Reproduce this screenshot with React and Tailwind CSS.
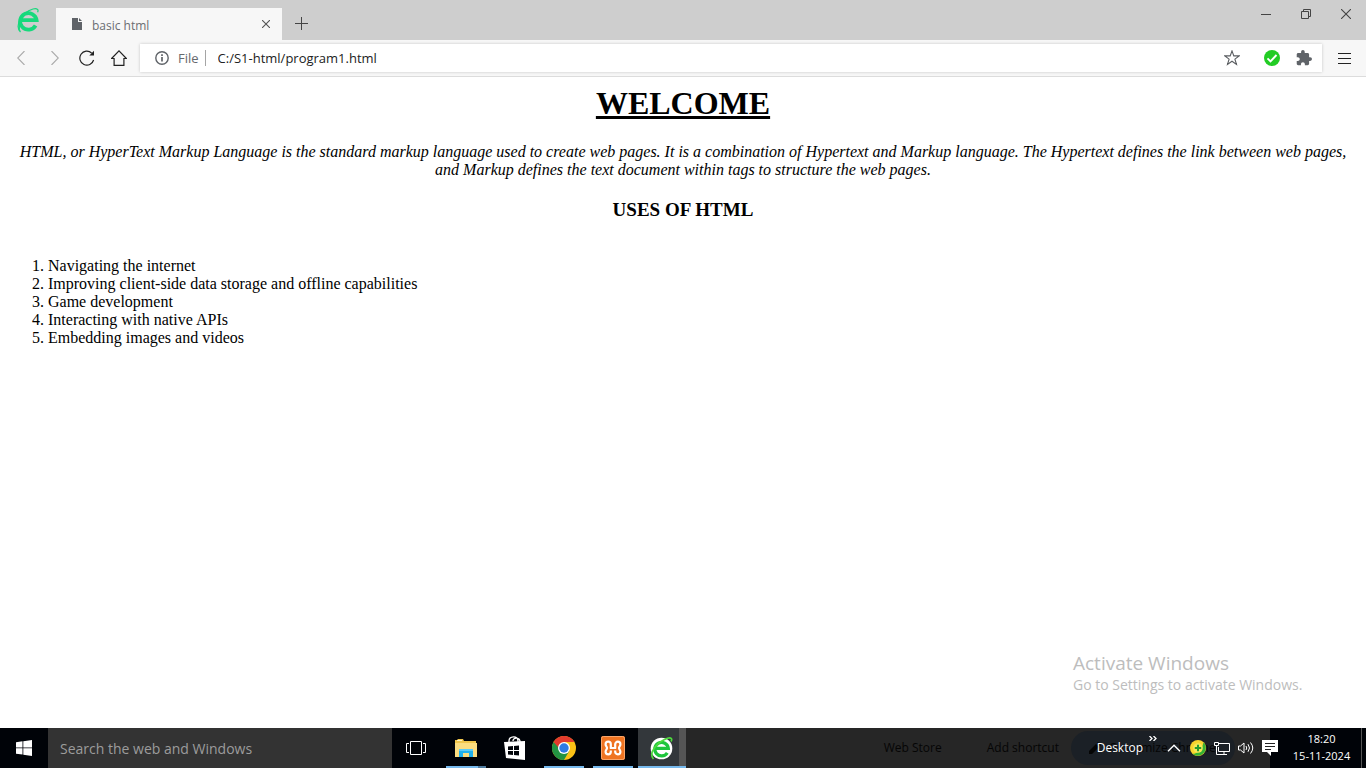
import React from "react";

const USES = [
  "Navigating the internet",
  "Improving client-side data storage and offline capabilities",
  "Game development",
  "Interacting with native APIs",
  "Embedding images and videos",
];

function BrowserLogo({ className }) {
  return (
    <svg viewBox="0 0 24 26" className={className} fill="none" aria-hidden="true">
      <path d="M6 13.200h14.600A8.300 8.300 0 1 0 19.600 18.500" stroke="currentColor" strokeWidth="3.800" />
      <path d="M4.500 25C-1 20 4 6 17 2c4-1 6 .4 4.600 3.200" stroke="currentColor" strokeWidth="1.200" />
      <path d="M4.500 25C0 19 3 8 14 3 6 10 2.500 18 4.500 25z" fill="currentColor" />
    </svg>
  );
}

function TitleBar() {
  return (
    <header className="flex h-10 items-stretch bg-[#cecece]">
      <div className="flex w-14 items-center justify-center">
        <BrowserLogo className="h-[26px] w-6 text-[#17d97c]" />
      </div>
      <div className="mt-2 flex w-[226px] items-center bg-[#f7f7f7] pl-4 pr-2.5">
        <svg viewBox="0 0 10 12" className="h-3 w-2.5" aria-hidden="true">
          <path d="M0 0h6v4h4v8H0z" fill="#5f6368" />
          <path d="M7 0l3 3H7z" fill="#5f6368" />
        </svg>
        <span className="ml-2.5 flex-1 pt-1 text-[12px] leading-4 text-[#6b6e72]">basic html</span>
        <button aria-label="Close tab" className="flex size-3 items-center justify-center">
          <svg viewBox="0 0 8 8" className="size-2" stroke="#555" strokeWidth="1.1"><path d="M0 0l8 8M8 0L0 8" /></svg>
        </button>
      </div>
      <button aria-label="New tab" className="flex w-[39px] items-center justify-center pt-[7px]">
        <svg viewBox="0 0 13 13" className="size-[13px]" stroke="#444"><path d="M0 6.500h13M6.500 0v13" /></svg>
      </button>
      <div className="ml-auto flex h-7 items-center">
        <button aria-label="Minimize" className="flex h-7 w-10 items-center justify-center">
          <svg viewBox="0 0 10 10" className="size-2.5" stroke="#444"><path d="M0 5.500h10" /></svg>
        </button>
        <button aria-label="Restore" className="flex h-7 w-10 items-center justify-center">
          <svg viewBox="0 0 10 10" className="size-2.5" fill="none" stroke="#444"><path d="M.5 2.500h7v7h-7zM2.500 2V.5h7v7H8" /></svg>
        </button>
        <button aria-label="Close" className="flex h-7 w-10 items-center justify-center">
          <svg viewBox="0 0 10 10" className="size-2.5" stroke="#444" strokeWidth="1.1"><path d="M0 0l10 10M10 0L0 10" /></svg>
        </button>
      </div>
    </header>
  );
}

function Toolbar() {
  return (
    <nav className="flex h-[37px] items-center border-b border-[#dcdcdc] bg-[#f7f7f7]">
      <div className="flex w-[140px] items-center gap-4 pl-[13px]">
        <button aria-label="Back" className="flex size-4 items-center justify-center">
          <svg viewBox="0 0 8 14" className="h-3.5 w-2" fill="none" stroke="#aaa" strokeWidth="1.1"><path d="M7.500 0L.7 7l6.800 7" /></svg>
        </button>
        <button aria-label="Forward" className="ml-0.5 flex size-4 items-center justify-center">
          <svg viewBox="0 0 8 14" className="h-3.5 w-2" fill="none" stroke="#aaa" strokeWidth="1.100"><path d="M.5 0l6.800 7L.5 14" /></svg>
        </button>
        <button aria-label="Reload" className="flex size-4 items-center justify-center">
          <svg viewBox="0 0 16 16" className="size-4" fill="none" stroke="#222" strokeWidth="1.200"><path d="M14.600 10A7 7 0 1 1 12.600 3" /><path d="M15 .8v4.700h-4.700z" fill="#222" stroke="none" /></svg>
        </button>
        <button aria-label="Home" className="flex size-4 items-center justify-center">
          <svg viewBox="0 0 16 16" className="size-4" fill="none" stroke="#222" strokeWidth="1.200"><path d="M.6 8.500L8 .9l7.400 7.600h-2.500v6.900H3.100V8.500z" /></svg>
        </button>
      </div>
      <div className="flex h-7 min-w-0 flex-1 items-center bg-white pl-[15px] pr-2.5 shadow-[0_0_3px_rgba(0,0,0,0.2)]">
        <svg viewBox="0 0 14 14" className="size-3.5 shrink-0" fill="none" stroke="#5f6368" strokeWidth="1.400" aria-hidden="true">
          <circle cx="7" cy="7" r="6.200" /><path d="M7 6v4.500M7 3.300v1.600" strokeWidth="1.700" />
        </svg>
        <label htmlFor="address" className="ml-[9px] mr-1.5 text-[13px] leading-4 text-[#66696d]">File</label>
        <span className="h-4 w-px bg-[#a5a5a5]" />
        <input id="address" defaultValue="C:/S1-html/program1.html" className="ml-3 min-w-0 flex-1 bg-transparent text-[13px] leading-5 text-[#222] outline-none" />
        <button aria-label="Bookmark" className="mr-6">
          <svg viewBox="0 0 16 16" className="block size-4" fill="none" stroke="#5a5d61" strokeWidth="1.100"><path d="M8 .9l1.800 5h5.400l-4.300 3.200 1.600 5.300L8 11.200l-4.500 3.200 1.600-5.300L.8 5.900h5.400z" /></svg>
        </button>
        <button aria-label="Site is safe" className="mr-4">
          <svg viewBox="0 0 16 16" className="block size-4"><circle cx="8" cy="8" r="8" fill="#22cc24" /><path d="M3.500 8.300l3 3 6-6.300" fill="none" stroke="#fff" strokeWidth="1.900" /></svg>
        </button>
        <button aria-label="Extensions">
          <svg viewBox="1 1 22 22" className="block size-4" fill="#5f6368"><path d="M20.500 11H19V7c0-1.100-.9-2-2-2h-4V3.500a2.500 2.500 0 0 0-5 0V5H4c-1.100 0-2 .9-2 2v3.800h1.500c1.500 0 2.700 1.200 2.700 2.700S5 16.200 3.500 16.200H2V20c0 1.100.9 2 2 2h3.800v-1.500c0-1.500 1.200-2.700 2.700-2.700s2.700 1.200 2.700 2.700V22H17c1.100 0 2-.9 2-2v-4h1.500a2.500 2.500 0 0 0 0-5z" /></svg>
        </button>
      </div>
      <button aria-label="Menu" className="flex w-11 items-center justify-center">
        <svg viewBox="0 0 13 12" className="mt-0.5 h-3 w-[13px]" stroke="#222"><path d="M0 .5h13M0 5.500h13M0 10.500h13" /></svg>
      </button>
    </nav>
  );
}

function Document() {
  return (
    <main className="flex-1 bg-white px-2 pt-2 font-['Liberation_Serif',serif] text-base leading-[18px] text-black">
      <h1 className="mb-[21px] text-center text-[32px] font-bold leading-[37px] underline">WELCOME</h1>
      <p className="mb-5 text-center italic">
        HTML, or HyperText Markup Language is the standard markup language used to create web pages. It is a combination
        of Hypertext and Markup language. The Hypertext defines the link between web pages, and Markup defines the text
        document within tags to structure the web pages.
      </p>
      <h3 className="mb-[37px] text-center text-[19px] font-bold leading-[21px]">USES OF HTML</h3>
      <ol className="list-decimal pl-10">
        {USES.map((use) => (
          <li key={use}>{use}</li>
        ))}
      </ol>
    </main>
  );
}

function TaskbarApps() {
  return (
    <div className="flex gap-px">
      <button aria-label="Task view" className="mr-px flex w-12 items-center justify-center">
        <svg viewBox="0 0 20 14" className="h-3.5 w-5" fill="none" stroke="#fff"><path d="M4.500.5h11v13h-11zM3 2.500H.5v9H3M17 2.500h2.500v9H17" /></svg>
      </button>
      <button aria-label="File Explorer" className="flex w-12 flex-col items-center">
        <span className="flex flex-1 items-center pt-0.5">
          <svg viewBox="0 0 22 18" className="h-[18px] w-[22px]">
            <path d="M0 1h2l1-1h5l1 2h12v16H0z" fill="#f0c64c" />
            <path d="M0 4h22v14H0z" fill="#fbdd80" />
            <path d="M2 1.500h5" stroke="#fff3c0" />
            <path d="M4 18v-8h14v8h-4v-4H8v4z" fill="#1fb0ec" />
            <path d="M4 10h14v2H4z" fill="#5ccbf5" />
          </svg>
        </span>
        <span className="flex h-0.5 w-10"><span className="flex-1 bg-[#76b9ed]" /><span className="w-2 bg-[#4f7ca0]" /></span>
      </button>
      <button aria-label="Store" className="flex w-12 items-center justify-center">
        <svg viewBox="0 0 22 24" className="h-6 w-[22px]">
          <path d="M5 7V5c0-5 9-6 9 0v2M9 5c0-4 7-4 7 1" fill="none" stroke="#fff" strokeWidth="1.400" />
          <path d="M0 6l21-1v19L2 22z" fill="#fff" />
          <path d="M4 10.500l5-.5v4H4zM10 10l5-.5V14h-5zM4 15h5v4l-5-.5zM10 15h5v4.500l-5-.5z" fill="#000308" />
        </svg>
      </button>
      <button aria-label="Chrome" className="flex w-12 flex-col items-center">
        <span className="flex flex-1 items-center pt-0.5">
          <svg viewBox="0 0 24 24" className="size-6">
            <circle cx="12" cy="12" r="12" fill="#fbc116" />
            <path d="M12 12L1.600 6A12 12 0 0 0 12 24l5.200-9z" fill="#229342" />
            <path d="M1.600 6a12 12 0 0 1 20.800 0H12v6H6.800z" fill="#e33b2e" />
            <circle cx="12" cy="12" r="6" fill="#fff" /><circle cx="12" cy="12" r="4.700" fill="#2e7be4" />
          </svg>
        </span>
        <span className="h-0.5 w-10 bg-[#76b9ed]" />
      </button>
      <button aria-label="XAMPP" className="flex w-12 flex-col items-center">
        <span className="flex flex-1 items-center pt-0.5">
          <svg viewBox="0 0 24 24" className="size-6">
            <rect width="24" height="24" rx="2" fill="#ef7422" /><rect x=".5" y=".5" width="23" height="23" rx="2" fill="none" stroke="#f8a66c" />
            <path d="M9.800 12V8.300a2.600 2.600 0 0 0-5.200 0c0 2 1.400 2.200 1.400 3.700s-1.400 1.700-1.400 3.700a2.600 2.600 0 0 0 5.200 0V14.500M14.200 12V8.300a2.600 2.600 0 0 1 5.200 0c0 2-1.400 2.200-1.400 3.700s1.400 1.700 1.400 3.700a2.600 2.600 0 0 1-5.200 0V14.500M8.800 12h6.400" fill="none" stroke="#fff" strokeWidth="2.200" />
          </svg>
        </span>
        <span className="h-0.5 w-10 bg-[#76b9ed]" />
      </button>
      <button aria-label="Browser" className="flex w-12 flex-col bg-[linear-gradient(to_right,#33373b_41px,#555_41px)]">
        <span className="flex flex-1 items-center justify-center pt-0.5">
          <svg viewBox="0 0 24 24" className="size-6" fill="none">
            <circle cx="11.500" cy="12.500" r="10.800" fill="#fff" />
            <path d="M5.500 12.300h12.800A6.800 6.800 0 1 0 17.300 16.800" stroke="#1fc53c" strokeWidth="3.200" />
            <path d="M3.500 23C-2 17 7 6 17.500 2.200c4-1 5 .8 3.500 3.300" stroke="#4ddc3c" strokeWidth="1.700" />
          </svg>
        </span>
        <span className="h-0.5 w-full bg-[#76b9ed]" />
      </button>
    </div>
  );
}

function Tray() {
  return (
    <div className="relative ml-auto flex">
      <div className="absolute right-[131px] top-[3px] flex h-[34px] items-center whitespace-nowrap text-[12px] text-[#050505]">
        <span className="mr-[45px]">Web Store</span>
        <span className="mr-3">Add shortcut</span>
        <span className="flex h-[34px] w-[164px] items-center rounded-full bg-[#1b2026] pl-[18px]">
          <svg viewBox="0 0 12 12" className="mr-2 size-3" fill="#050505" aria-hidden="true"><path d="M0 9l7-7 3 3-7 7H0zM8 1l1-1 3 3-1 1z" /></svg>
          Customize Chrome
        </span>
      </div>
      <div className="relative flex items-center">
        <button className="flex items-center text-[12px] text-white">Desktop</button>
        <button aria-label="More shortcuts" className="mb-5 ml-1.5">
          <svg viewBox="0 0 8 5" className="block h-[5px] w-2" fill="none" stroke="#fff" strokeWidth="1.300"><path d="M.5 0L3 2.500.5 5M4.500 0L7 2.500 4.500 5" /></svg>
        </button>
        <button aria-label="Show hidden icons" className="ml-2.5">
          <svg viewBox="0 0 14 8" className="block h-2 w-3.5" fill="none" stroke="#fff" strokeWidth="1.400"><path d="M1 7.300l6-6 6 6" /></svg>
        </button>
        <button aria-label="Antivirus" className="ml-[9px]">
          <svg viewBox="0 0 16 16" className="block size-4"><circle cx="8" cy="8" r="8" fill="#f8d42d" /><path d="M13.500 2.200A8 8 0 0 1 2.500 13.800C7 14 12 10 13.500 2.200z" fill="#34b233" /><circle cx="8" cy="8" r="4.800" fill="#f5e957" /><path d="M8 4.800v6.400M4.800 8h6.400" stroke="#279b2d" strokeWidth="2" /></svg>
        </button>
        <button aria-label="Network" className="ml-2">
          <svg viewBox="0 0 16 13" className="block h-[13px] w-4" fill="none" stroke="#fff"><path d="M5 1.500h10.500v8h-11V5M.5.5h4v3h-4zM2.500 3.500v9H6M10 9.500v3M6 12.500h7" /></svg>
        </button>
        <button aria-label="Volume" className="ml-2">
          <svg viewBox="0 0 16 14" className="block h-3.5 w-4" fill="none" stroke="#fff"><path d="M.5 5v4h2L6 12V2L2.500 5zM8 5q1.500 2 0 4M10 3.200q3 3.800 0 7.600M12.500 1.500q4.500 5.500 0 11" /></svg>
        </button>
        <button aria-label="Notifications" className="ml-2">
          <svg viewBox="0 0 16 16" className="block size-4"><path d="M0 0h16v12H9v4l-4-4H0z" fill="#fff" /><path d="M3 3.500h10M3 6.500h10M3 9.500h6" stroke="#222" /></svg>
        </button>
      </div>
      <time className="-ml-2 flex w-[91px] flex-col justify-center bg-[#000308] pb-0.5 pl-3 text-center text-[11px] leading-[17px] text-white">
        <span>18:20</span>
        <span className="whitespace-nowrap">15-11-2024</span>
      </time>
      <button aria-label="Show desktop" className="w-[5px] border-l border-[#555] bg-[#000308]" />
    </div>
  );
}

export default function App() {
  return (
    <div className="relative flex min-h-screen flex-col font-['Open_Sans','Noto_Sans',sans-serif]">
      <TitleBar />
      <Toolbar />
      <Document />
      <aside className="pointer-events-none absolute bottom-[73px] right-[57px] w-[236px] text-[#bdbdbd]">
        <p className="text-[19px] leading-6">Activate Windows</p>
        <p className="text-[14px] leading-5">Go to Settings to activate Windows.</p>
      </aside>
      <footer className="flex h-10 bg-[#262626]">
        <div className="flex bg-[#000308]">
          <button aria-label="Start" className="flex w-12 items-center justify-center">
            <svg viewBox="0 0 16 16" className="size-4" fill="#fff"><path d="M0 2.200L6.500 1.300v6.200H0zM7.300 1.200L16 0v7.500H7.300zM0 8.300h6.500v6.300L0 13.700zM7.300 8.300H16V16l-8.700-1.300z" /></svg>
          </button>
          <input aria-label="Search the web and Windows" placeholder="Search the web and Windows" className="w-[344px] bg-[#333] px-3 text-[14px] text-white outline-none placeholder:text-[#9c9c9c]" />
          <TaskbarApps />
        </div>
        <Tray />
      </footer>
    </div>
  );
}
